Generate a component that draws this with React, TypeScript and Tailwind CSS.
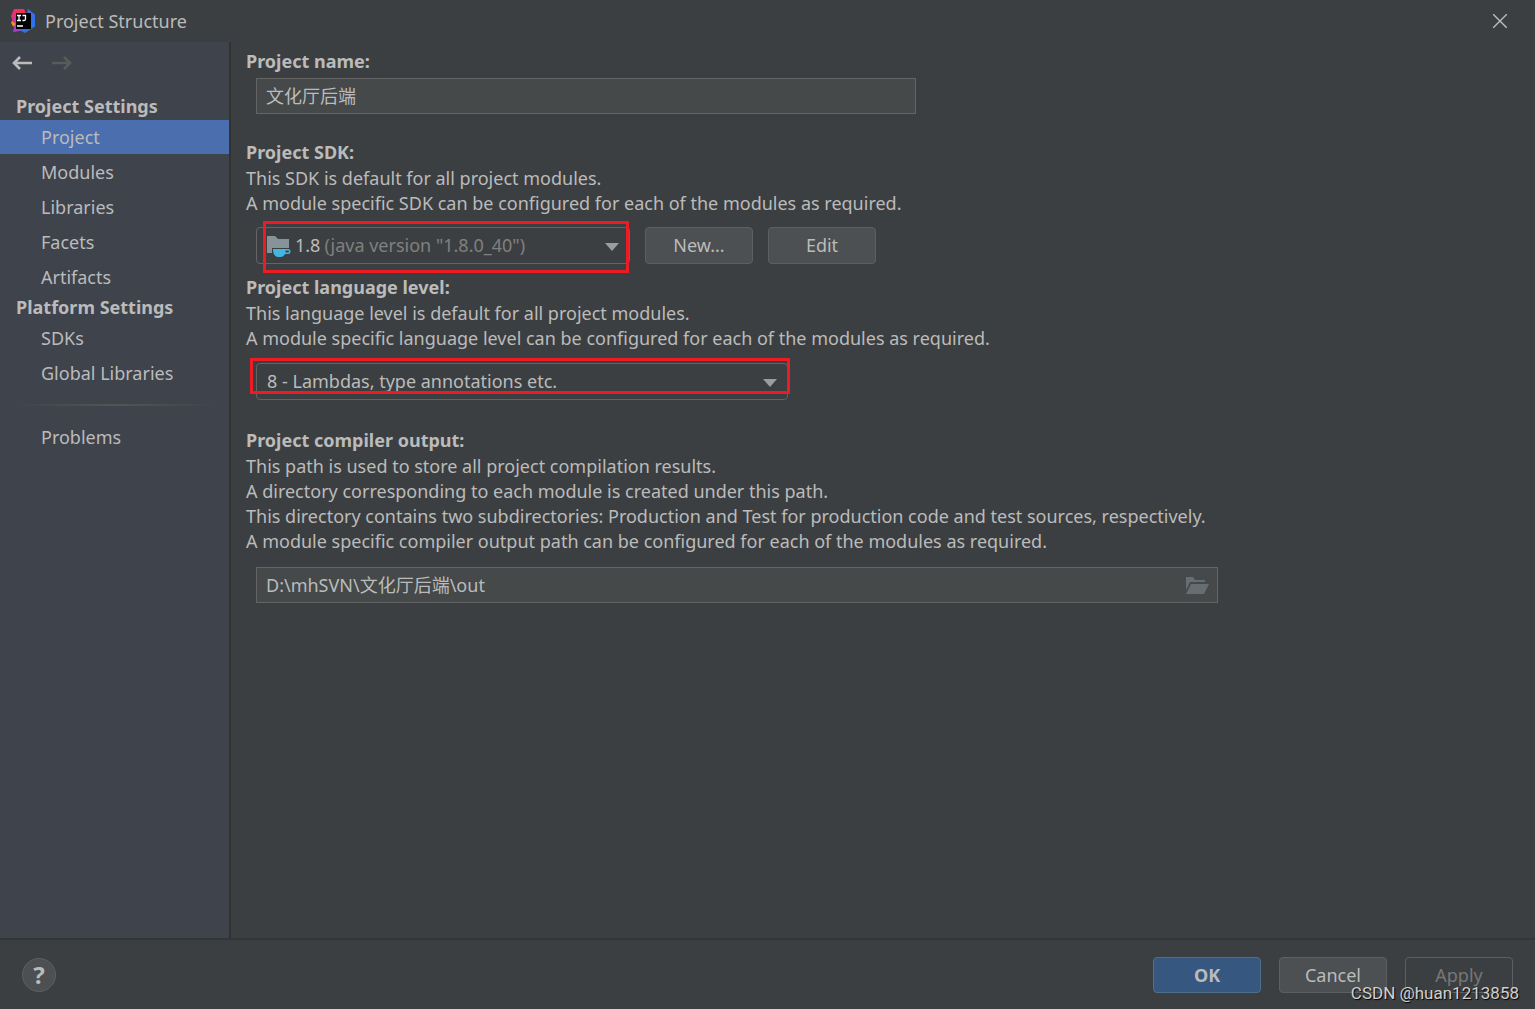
import type { ReactNode } from 'react';

interface NavItem {
  name: string;
  active?: boolean;
}

const projectItems: NavItem[] = [
  { name: 'Project', active: true },
  { name: 'Modules' },
  { name: 'Libraries' },
  { name: 'Facets' },
  { name: 'Artifacts' },
];

const platformItems: NavItem[] = [{ name: 'SDKs' }, { name: 'Global Libraries' }];

function IdeaLogo() {
  return (
    <svg width="24" height="24" viewBox="0 0 24 24" aria-hidden="true">
      <defs>
        <linearGradient id="idea-blue" x1="0" y1="0" x2="1" y2="1">
          <stop offset="0" stopColor="#7a5bd6" />
          <stop offset="0.5" stopColor="#3b6be8" />
          <stop offset="1" stopColor="#1f7af0" />
        </linearGradient>
        <linearGradient id="idea-pink" x1="0" y1="1" x2="1" y2="0">
          <stop offset="0" stopColor="#a63fc4" />
          <stop offset="0.5" stopColor="#f0306a" />
          <stop offset="1" stopColor="#fe2d55" />
        </linearGradient>
      </defs>
      <path d="M0 13.500 4 9l1 8-3 .5z" fill="#fc8a1c" />
      <path d="M3 0h10l2 5-8 11-5-3-2-6z" fill="url(#idea-pink)" />
      <path d="M17 0l7 5.500v12L14 24l-6-3 8-17z" fill="url(#idea-blue)" />
      <path d="M2 23l2-8 7 5-2 2z" fill="#a142c8" />
      <rect x="5" y="4" width="15" height="16" fill="#000" />
      <path
        d="M6 6.500h4M8 6.500v5M6 11.500h4M11.500 6.500h3v3.600q0 1.400-1.400 1.400h-1.600M6 17h6"
        fill="none"
        stroke="#fff"
        strokeWidth="1.300"
      />
    </svg>
  );
}

function ArrowIcon({ forward = false }: { forward?: boolean }) {
  return (
    <svg width="20" height="14" viewBox="0 0 20 14" fill="none" stroke="currentColor" strokeWidth="2.600" aria-hidden="true">
      {forward ? <path d="M0 7h18M12 1l6 6-6 6" /> : <path d="M20 7H2M8 1 2 7l6 6" />}
    </svg>
  );
}

function CaretIcon() {
  return (
    <svg
      width="14"
      height="8"
      viewBox="0 0 14 8"
      className="pointer-events-none absolute right-[10px] top-[15px] fill-[#9a9da0]"
      aria-hidden="true"
    >
      <path d="M0 0h14L7 8z" />
    </svg>
  );
}

function JdkIcon() {
  return (
    <svg width="24" height="22" viewBox="0 0 24 22" className="shrink-0" aria-hidden="true">
      <path d="M0 1h8l3 3h11v9H5v5H0z" fill="#87939a" />
      <path
        d="M6 14h15a2.500 2.500 0 0 1 0 5h-3Q16.500 22 13.500 22h-3Q6 21 6 14zm12.500 1.500v2H21q1 0 1-1t-1-1z"
        fill="#40b6e0"
        fillRule="evenodd"
      />
    </svg>
  );
}

function FolderIcon() {
  return (
    <svg width="24" height="18" viewBox="0 0 24 18" fill="#676e72" aria-hidden="true">
      <path d="M1 1h7l2 3h10v2H5L1 14z" />
      <path d="M6 8h18l-5 10H1z" />
    </svg>
  );
}

function NavList({ items }: { items: NavItem[] }) {
  return (
    <ul className="flex flex-col gap-px">
      {items.map((item) => (
        <li key={item.name}>
          <a
            href="#"
            aria-current={item.active ? 'page' : undefined}
            className={`block h-[34px] pl-[41px] leading-[34px] ${item.active ? 'bg-[#4b6eaf]' : ''}`}
          >
            {item.name}
          </a>
        </li>
      ))}
    </ul>
  );
}

function NavHeading({ children }: { children: ReactNode }) {
  return <h2 className="pl-4 font-bold leading-[27px]">{children}</h2>;
}

function Highlight({ className }: { className: string }) {
  return <div className={`pointer-events-none absolute border-3 border-[#ed1c24] ${className}`} />;
}

export default function App() {
  return (
    <div className="flex min-h-screen flex-col bg-[#3c3f41] font-['Noto_Sans','Noto_Sans_CJK_SC',sans-serif] text-lg text-[#bbbbbb]">
      <header className="flex h-[42px] items-center pl-[11px] pr-[28px]">
        <IdeaLogo />
        <h1 className="ml-[10px] flex-1">Project Structure</h1>
        <button type="button" aria-label="Close">
          <svg width="14" height="14" viewBox="0 0 14 14" fill="none" stroke="currentColor" strokeWidth="1.400">
            <path d="M0 0l14 14M14 0 0 14" />
          </svg>
        </button>
      </header>

      <div className="flex flex-1">
        <nav className="w-[231px] shrink-0 border-r-2 border-[#323232] bg-[#3f434c]">
          <div className="mb-[10px] flex h-[41px] items-center gap-5 pl-3">
            <button type="button" aria-label="Back">
              <ArrowIcon />
            </button>
            <button type="button" aria-label="Forward" disabled className="text-[#585a5c]">
              <ArrowIcon forward />
            </button>
          </div>
          <NavHeading>Project Settings</NavHeading>
          <NavList items={projectItems} />
          <NavHeading>Platform Settings</NavHeading>
          <NavList items={platformItems} />
          <div className="mx-3 my-[14px] h-0.5 bg-linear-to-r from-transparent via-[#555453] to-transparent" />
          <NavList items={[{ name: 'Problems' }]} />
        </nav>

        <main className="min-w-0 flex-1 pl-[15px] pt-[7px] leading-[25px]">
          <label htmlFor="project-name" className="block font-bold">
            Project name:
          </label>
          <input
            id="project-name"
            type="text"
            defaultValue="文化厅后端"
            className="ml-[10px] mt-1 block h-9 w-[660px] border border-[#646464] bg-[#45494a] px-[9px] pb-[3px] outline-none"
          />

          {/* SDK */}
          <label htmlFor="sdk" className="mb-px mt-[26px] block font-bold">
            Project SDK:
          </label>
          <p>This SDK is default for all project modules.</p>
          <p>A module specific SDK can be configured for each of the modules as required.</p>
          <div className="ml-[10px] mt-[11px] flex items-center">
            <div className="relative flex h-[37px] w-[374px] items-center rounded-[4px] border border-[#646464] pl-[10px]">
              <JdkIcon />
              <span className="ml-1">1.8</span>
              <select id="sdk" className="h-full flex-1 appearance-none bg-transparent pl-1 text-[#808080] outline-none">
                <option>(java version "1.8.0_40")</option>
              </select>
              <CaretIcon />
              <Highlight className="-top-[7px] left-[6px] h-[52px] w-[366px]" />
            </div>
            <button type="button" className="ml-[15px] h-[37px] w-[108px] rounded-[4px] border border-[#5e6060] bg-[#4c5052]">
              New...
            </button>
            <button type="button" className="ml-[15px] h-[37px] w-[108px] rounded-[4px] border border-[#5e6060] bg-[#4c5052]">
              Edit
            </button>
          </div>

          {/* Language level */}
          <label htmlFor="level" className="mb-px mt-[11px] block font-bold">
            Project language level:
          </label>
          <p>This language level is default for all project modules.</p>
          <p>A module specific language level can be configured for each of the modules as required.</p>
          <div className="relative ml-[10px] mt-3 h-[37px] w-[532px] rounded-[4px] border border-[#646464]">
            <select id="level" className="h-full w-full appearance-none bg-transparent pl-[10px] outline-none">
              <option>8 - Lambdas, type annotations etc.</option>
            </select>
            <CaretIcon />
            <Highlight className="-left-[7px] -top-[6px] h-9 w-[540px]" />
          </div>

          {/* Compiler output */}
          <label htmlFor="output" className="mb-px mt-7 block font-bold">
            Project compiler output:
          </label>
          <p>This path is used to store all project compilation results.</p>
          <p>A directory corresponding to each module is created under this path.</p>
          <p>This directory contains two subdirectories: Production and Test for production code and test sources, respectively.</p>
          <p>A module specific compiler output path can be configured for each of the modules as required.</p>
          <div className="ml-[10px] mt-[13px] flex h-9 w-[962px] items-center border border-[#646464] bg-[#45494a] pr-2">
            <input
              id="output"
              type="text"
              defaultValue="D:\mhSVN\文化厅后端\out"
              className="h-full flex-1 bg-transparent px-[9px] pb-[3px] outline-none"
            />
            <button type="button" aria-label="Browse">
              <FolderIcon />
            </button>
          </div>
        </main>
      </div>

      <footer className="relative flex h-[71px] items-center gap-[18px] border-t-2 border-[#333638] px-[22px]">
        <button
          type="button"
          aria-label="Help"
          className="mr-auto h-[34px] w-[34px] rounded-full border border-[#5e6060] bg-[#4c5052] text-2xl font-bold leading-8"
        >
          ?
        </button>
        <button type="button" className="h-9 w-[108px] rounded-[4px] border border-[#4c708c] bg-[#365880] font-bold">
          OK
        </button>
        <button type="button" className="h-9 w-[108px] rounded-[4px] border border-[#5e6060] bg-[#4c5052]">
          Cancel
        </button>
        <button type="button" disabled className="h-9 w-[108px] rounded-[4px] border border-[#5e6060] text-[#777777]">
          Apply
        </button>
        <span className="pointer-events-none absolute bottom-1 right-4 font-[Roboto,sans-serif] text-[17px] leading-6 text-[#d0d0d0] [text-shadow:1px_1px_1px_#000]">
          CSDN @huan1213858
        </span>
      </footer>
    </div>
  );
}
